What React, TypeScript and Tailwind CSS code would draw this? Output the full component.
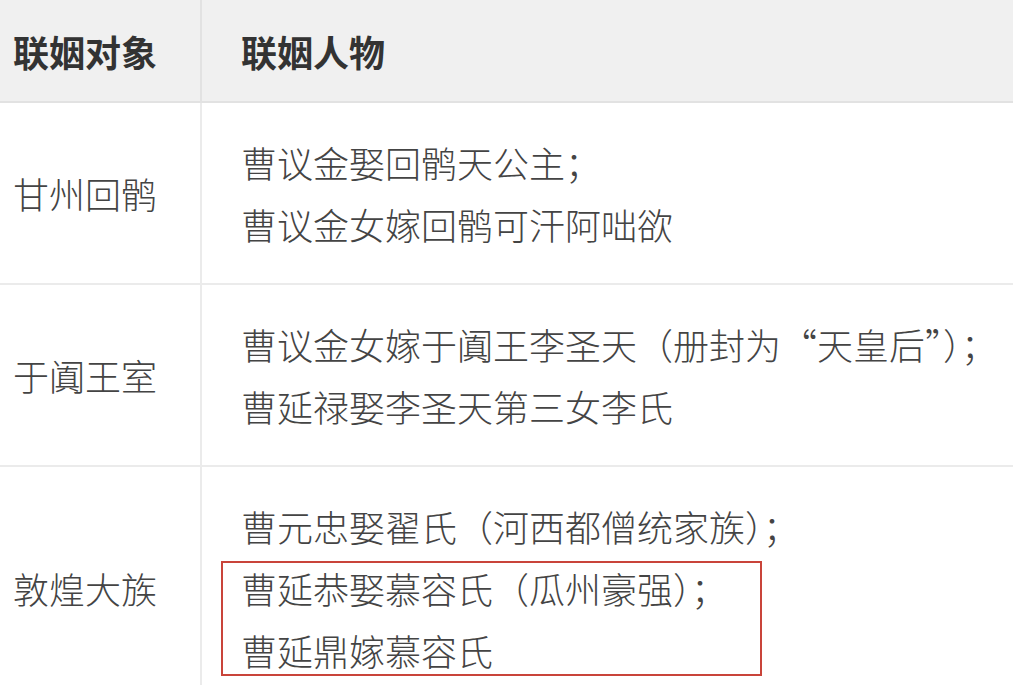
const rows = [
  {
    party: '甘州回鹘',
    lines: ['曹议金娶回鹘天公主；', '曹议金女嫁回鹘可汗阿咄欲'],
  },
  {
    party: '于阗王室',
    lines: ['曹议金女嫁于阗王李圣天（册封为“天皇后”）；', '曹延禄娶李圣天第三女李氏'],
  },
]

export default function App() {
  return (
    <div
      className="w-[1013px] h-[685px] overflow-hidden bg-white text-[36px] font-light text-[#444] whitespace-nowrap"
      style={{ fontFamily: '"Noto Sans CJK SC", "Noto Sans", sans-serif' }}
    >
      <div className="flex h-[103px] bg-[#f0f0f0] border-b-2 border-[#e2e2e2] font-bold text-[#333]">
        <div className="w-[202px] border-r-2 border-[#e2e2e2] pl-[13px] flex items-center">联姻对象</div>
        <div className="flex-1 pl-[39px] flex items-center">联姻人物</div>
      </div>

      {rows.map((row) => (
        <div key={row.party} className="flex border-b-2 border-[#ebebeb]">
          <div className="w-[202px] shrink-0 border-r-2 border-[#ebebeb] pl-[13px] flex items-center">
            {row.party}
          </div>
          <div className="flex-1 pl-[39px] py-[28px] leading-[62px]">
            {row.lines.map((line) => (
              <div key={line}>{line}</div>
            ))}
          </div>
        </div>
      ))}

      <div className="flex">
        <div className="w-[202px] shrink-0 border-r-2 border-[#ebebeb] pl-[13px] flex items-center">
          敦煌大族
        </div>
        <div className="flex-1 pl-[39px] py-[28px] leading-[62px]">
          <div>曹元忠娶翟氏（河西都僧统家族）；</div>
          <div className="relative">
            <div>曹延恭娶慕容氏（瓜州豪强）；</div>
            <div>曹延鼎嫁慕容氏</div>
            <span className="absolute -left-[20px] top-[4px] w-[541px] h-[115px] border-2 border-[#c9443a]" />
          </div>
        </div>
      </div>
    </div>
  )
}
